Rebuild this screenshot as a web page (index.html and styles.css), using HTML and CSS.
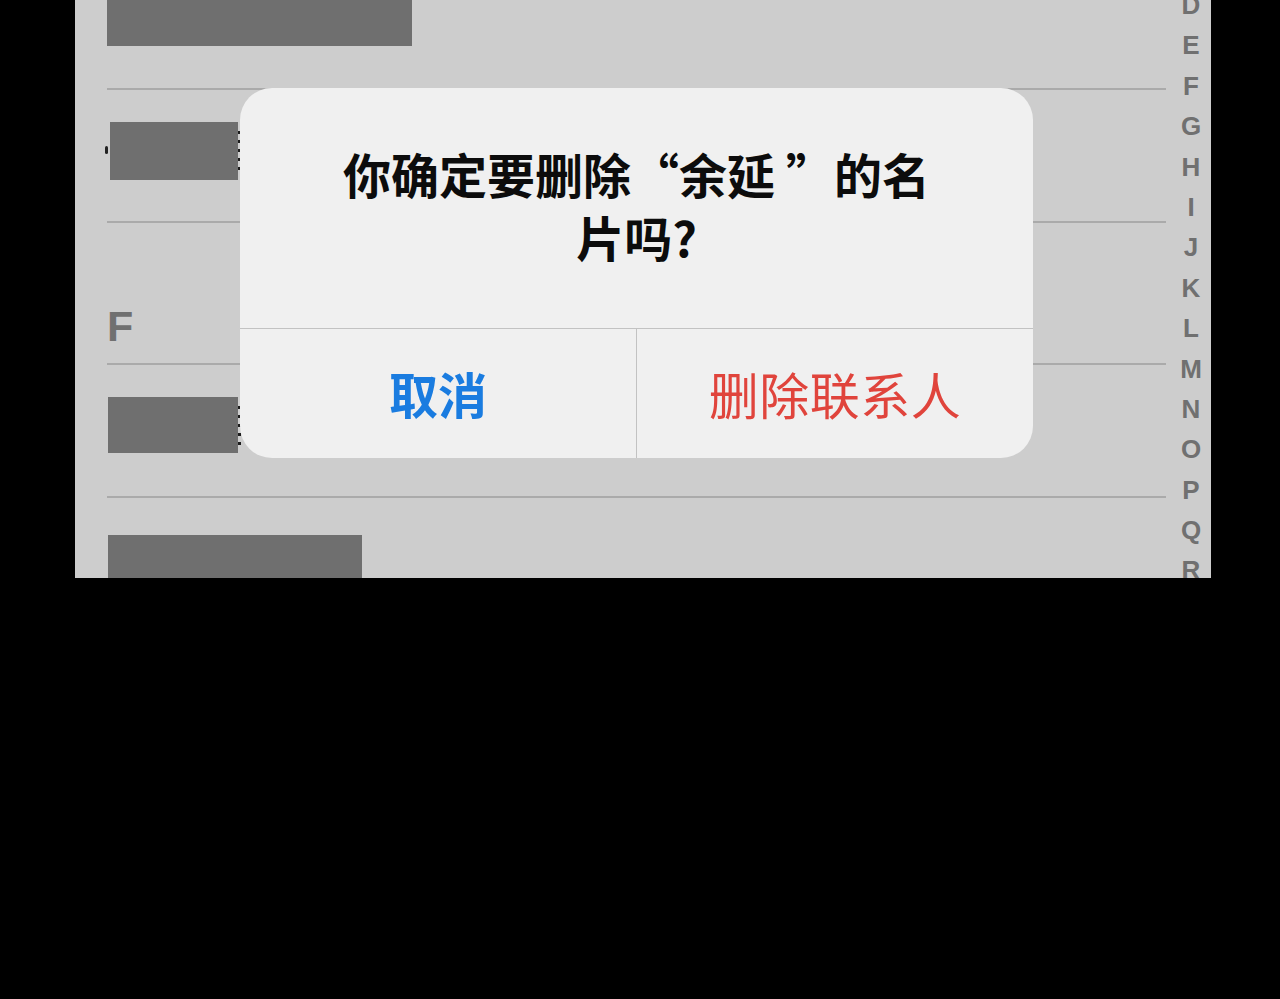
FILE: index.html
```html
<!DOCTYPE html>
<html lang="zh-CN">
<head>
<meta charset="utf-8">
<title>删除联系人</title>
<link rel="stylesheet" href="styles.css">
</head>
<body>
<div class="screen">
  <div class="list">
    <div class="row row-first">
      <div class="redact redact-1"></div>
    </div>
    <div class="sep"></div>
    <div class="row row-mid">
      <div class="peek-left"></div>
      <div class="redact redact-2"></div>
      <div class="peek-right"></div>
    </div>
    <div class="sep"></div>
    <div class="section">F</div>
    <div class="sep"></div>
    <div class="row row-mid row-3">
      <div class="redact redact-3"></div>
      <div class="peek-right"></div>
    </div>
    <div class="sep"></div>
    <div class="row row-last">
      <div class="redact redact-4"></div>
    </div>
  </div>
  <div class="index">
    <span>D</span><span>E</span><span>F</span><span>G</span><span>H</span><span>I</span><span>J</span><span>K</span><span>L</span><span>M</span><span>N</span><span>O</span><span>P</span><span>Q</span><span>R</span>
  </div>

  <div class="alert">
    <div class="alert-title">你确定要删除“余延 ”的名<br>片吗?</div>
    <div class="alert-actions">
      <div class="btn btn-cancel">取消</div>
      <div class="btn btn-delete">删除联系人</div>
    </div>
  </div>
</div>
</body>
</html>
```

FILE: styles.css
```css
html, body {
  margin: 0;
  padding: 0;
  background: #000;
}
body {
  width: 1280px;
  height: 999px;
  overflow: hidden;
  font-family: "Noto Sans CJK SC", "Noto Sans", "Liberation Sans", sans-serif;
}
.screen {
  position: relative;
  margin-left: 75px;
  width: 1136px;
  height: 578px;
  background: #cdcdcd;
  display: flex;
  overflow: hidden;
}
.list {
  flex: 1;
  padding-left: 32px;
  display: flex;
  flex-direction: column;
}
.sep {
  height: 2px;
  background: #aaaaaa;
  flex: none;
}
.row {
  flex: none;
  display: flex;
  align-items: flex-start;
  box-sizing: border-box;
}
.row-first { height: 88px; }
.row-mid { height: 131px; padding-top: 32px; }
.row-last { height: 80px; padding-top: 37px; }
.redact { background: #6f6f6f; flex: none; }
.redact-1 { width: 305px; height: 46px; }
.redact-2 { width: 128px; height: 58px; margin-left: 3px; }
.redact-3 { width: 130px; height: 56px; margin-left: 1px; }
.redact-4 { width: 254px; height: 60px; margin-left: 1px; }
.peek-left {
  width: 3px;
  height: 8px;
  background: #222;
  border-radius: 2px;
  margin-top: 24px;
  margin-left: -2px;
  margin-right: -1px;
  flex: none;
}
.peek-right {
  width: 3px;
  height: 40px;
  margin-top: 9px;
  flex: none;
  background: repeating-linear-gradient(to bottom, #1c1c1c 0 3px, transparent 3px 9px);
}
.section {
  flex: none;
  height: 140px;
  box-sizing: border-box;
  padding-top: 81px;
  font-family: "Liberation Sans", Arial, sans-serif;
  font-weight: 700;
  font-size: 43px;
  line-height: 44px;
  color: #707070;
}
.index {
  width: 45px;
  flex: none;
  display: flex;
  flex-direction: column;
  align-items: center;
  margin-top: -15px;
  padding-left: 5px;
  box-sizing: border-box;
  font-family: "Liberation Sans", Arial, sans-serif;
  font-weight: 700;
  font-size: 26px;
  color: #707070;
}
.index span {
  display: block;
  height: 40.4px;
  line-height: 40.4px;
}
.alert {
  position: absolute;
  left: 165px;
  top: 88px;
  width: 793px;
  height: 370px;
  background: #f0f0f0;
  border-radius: 32px;
  display: flex;
  flex-direction: column;
  overflow: hidden;
}
.alert-title {
  height: 241px;
  box-sizing: border-box;
  padding-top: 54px;
  text-align: center;
  font-weight: 700;
  font-size: 48px;
  line-height: 63px;
  color: #0c0c0c;
  border-bottom: 1.5px solid #c2c2c2;
  flex: none;
}
.alert-actions {
  flex: 1;
  display: flex;
}
.btn {
  flex: 1;
  display: flex;
  align-items: center;
  justify-content: center;
  font-size: 49px;
  padding-bottom: 2px;
}
.btn-cancel {
  color: #1a7ce0;
  font-weight: 700;
  border-right: 1.5px solid #c2c2c2;
}
.btn-delete {
  color: #e0443c;
  font-weight: 400;
  font-size: 50px;
  letter-spacing: 0.5px;
}
```
